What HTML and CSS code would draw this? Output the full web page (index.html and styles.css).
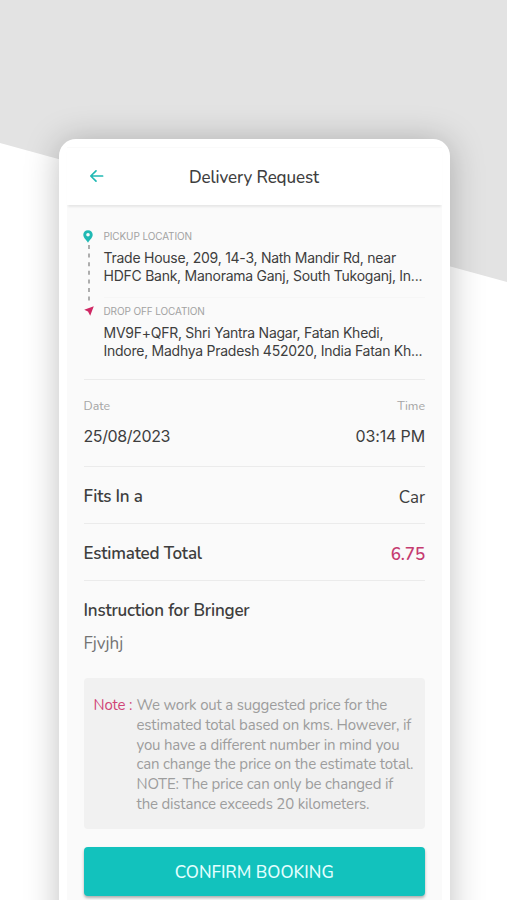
FILE: index.html
```html
<!DOCTYPE html>
<html lang="en">
<head>
<meta charset="utf-8">
<title>Delivery Request</title>
<link rel="stylesheet" href="styles.css">
</head>
<body>
<main class="phone">
  <div class="screen">
    <header class="header">
      <svg class="back" viewBox="0 0 16 14" fill="none" stroke="#20b9b4" stroke-width="1.7" stroke-linecap="round" stroke-linejoin="round"><path d="M13.6 7H2M7 1.8L1.8 7L7 12.2"/></svg>
      <h1 class="title">Delivery Request</h1>
    </header>
    <section class="content">
      <div class="route">
        <div class="track">
          <svg class="pin" viewBox="0 0 10 13"><path fill="#20b9b4" fill-rule="evenodd" d="M5 .2C2.2.2.3 2.2.3 4.8C.3 7.8 3 9.5 5 12.8C7 9.5 9.7 7.8 9.7 4.8C9.7 2.2 7.8.2 5 .2ZM5 3A1.8 1.8 0 1 1 5 6.6A1.8 1.8 0 1 1 5 3Z"/></svg>
          <svg class="dashes" viewBox="0 0 2 62"><path d="M1 2V60" stroke="#858585" stroke-width="1.3" stroke-dasharray="4 4.6"/></svg>
          <svg class="arrow" viewBox="0 0 10 10"><path fill="#cf2864" d="M9.8.2L.2 3.8L4 5.4L6.2 9.8Z"/></svg>
        </div>
        <div class="stops">
          <div class="stop">
            <div class="label">PICKUP LOCATION</div>
            <div class="address">Trade House, 209, 14-3, Nath Mandir Rd, near<br>HDFC Bank, Manorama Ganj, South Tukoganj, In...</div>
            <div class="divider"></div>
          </div>
          <div class="stop">
            <div class="label">DROP OFF LOCATION</div>
            <div class="address">MV9F+QFR, Shri Yantra Nagar, Fatan Khedi,<br>Indore, Madhya Pradesh 452020, India Fatan Kh...</div>
          </div>
        </div>
      </div>
      <div class="schedule">
        <div class="cell"><span class="caption">Date</span><span class="value">25/08/2023</span></div>
        <div class="cell end"><span class="caption">Time</span><span class="value time">03:14 PM</span></div>
      </div>
      <div class="row"><span class="name">Fits In a</span><span class="car">Car</span></div>
      <div class="row"><span class="name">Estimated Total</span><span class="price">6.75</span></div>
      <div class="instruction"><h2 class="name">Instruction for Bringer</h2><p class="detail">Fjvjhj</p></div>
      <div class="note">
        <div class="note-label">Note :</div>
        <p class="note-text">We work out a suggested price for the<br>estimated total based on kms. However, if<br>you have a different number in mind you<br>can change the price on the estimate total.<br>NOTE: The price can only be changed if<br>the distance exceeds 20 kilometers.</p>
      </div>
      <button class="confirm">CONFIRM BOOKING</button>
    </section>
  </div>
</main>
</body>
</html>
```
FILE: styles.css
```css
* { box-sizing: border-box; }
html, body { margin: 0; height: 900px; overflow: hidden; }
body {
  position: relative;
  padding-top: 139px;
  background: #fff;
  font-family: Nunito, Lato, "Noto Sans", sans-serif;
  color: #3e3e3e;
}
body::before {
  content: "";
  position: absolute;
  inset: 0 0 auto;
  height: 283px;
  background: #e3e3e3;
  clip-path: polygon(0 0, 100% 0, 100% 282px, 0 143px);
}
.phone {
  position: relative;
  z-index: 0;
  width: 391px;
  height: 761px;
  margin-left: 58.5px;
  padding: 8px 8px 0;
}
.phone::before {
  content: "";
  position: absolute;
  z-index: -1;
  inset: 0 0 -60px;
  background: #fff;
  border-radius: 17px;
  box-shadow: 0 2px 34px rgba(0, 0, 0, .25);
}
.screen { background: #fafafa; height: 100%; border-top: 1px solid #fafafa; }
.header {
  height: 57px;
  background: #fff;
  display: flex;
  align-items: center;
  box-shadow: 0 3px 2px -1px rgba(0, 0, 0, .08);
}
.back { width: 16px; height: 14px; margin: -1px 0 0 22px; }
.title { margin: 3px 0 0 84.5px; font-size: 17px; font-weight: 500; line-height: 24px; letter-spacing: -.12px; white-space: nowrap; }
.content { padding: 0 16.5px 0 17px; }
.route { height: 175px; display: flex; border-bottom: 1px solid #ebebeb; padding-top: 25px; }
.track { width: 20px; display: flex; flex-direction: column; }
.pin { width: 10px; height: 13px; margin-left: -.5px; }
.dashes { width: 2px; height: 62px; margin-left: 4.5px; }
.arrow { width: 10px; height: 10px; margin-top: 1px; }
.stops { flex: 1; font-family: Inter, sans-serif; white-space: nowrap; }
.stop { height: 75px; }
.label { font-size: 10px; line-height: 12px; color: #a2a2a2; letter-spacing: -.12px; }
.address { margin-top: 7px; font-size: 14px; line-height: 18px; letter-spacing: -.26px; }
.divider { height: 1px; margin-top: 12px; background: #f6f6f6; }
.schedule { height: 87px; border-bottom: 1px solid #ebebeb; display: flex; justify-content: space-between; padding-top: 18px; }
.cell { display: flex; flex-direction: column; }
.end { align-items: flex-end; }
.caption { font-size: 12.4px; line-height: 16px; color: #a5a5a5; }
.value { font-family: Inter, sans-serif; font-size: 16px; line-height: 20px; margin-top: 12px; letter-spacing: -.4px; }
.time { letter-spacing: -.15px; }
.row { height: 57px; border-bottom: 1px solid #ebebeb; display: flex; justify-content: space-between; align-items: center; padding-top: 4px; }
.name { font-size: 17px; font-weight: 600; line-height: 22px; margin: 0; letter-spacing: -.2px; }
.car { font-size: 17px; }
.price { font-size: 17px; font-weight: 600; color: #c53b70; letter-spacing: -.1px; }
.instruction { padding-top: 19px; height: 97px; }
.detail { margin: 11px 0 0; font-size: 17px; line-height: 22px; color: #737373; }
.note { height: 151px; background: #f1f1f1; border-radius: 4px; padding: 18px 0 0 10px; display: flex; color: #9d9d9d; font-size: 15px; line-height: 19.8px; white-space: nowrap; letter-spacing: -.18px; }
.note-label { width: 43px; color: #d04577; }
.note-text { margin: 0; }
.confirm { display: block; width: 100%; height: 49px; margin: 17.5px 0 0; padding: 3px 0 0; border: 0; border-radius: 4px; background: #12c2bd; color: #e3ffff; font: 500 17px/46px Nunito, Lato, sans-serif; box-shadow: 0 2px 3px rgba(0, 0, 0, .3); }
```
